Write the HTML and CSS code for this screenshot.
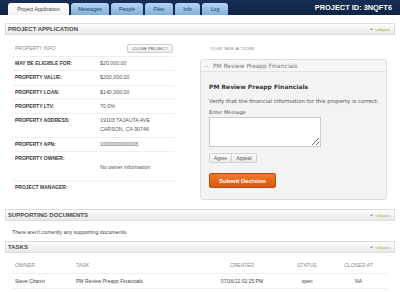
FILE: index.html
```html
<!DOCTYPE html>
<html lang="en">
<head>
<meta charset="utf-8">
<title>Project Application</title>
<link rel="stylesheet" href="styles.css">
</head>
<body>
<header class="topbar">
  <nav class="tabs">
    <span class="tab active t-app">Project Application</span>
    <span class="tab t-msg">Messages</span>
    <span class="tab t-people">People</span>
    <span class="tab t-files">Files</span>
    <span class="tab t-info">Info</span>
    <span class="tab t-log">Log</span>
  </nav>
  <div class="project-id">PROJECT ID: 3NQFT6</div>
</header>

<main class="page">
  <div class="bar">
    <span class="bar-title">PROJECT APPLICATION</span>
    <a class="collapse"><svg class="tri" width="3" height="2" viewBox="0 0 3 2"><path d="M0 2L1.5 0L3 2Z"/></svg>collapse</a>
  </div>

  <div class="columns">
    <section class="info">
      <div class="info-head">
        <span>PROPERTY INFO</span>
        <button class="close-btn">CLOSE PROJECT</button>
      </div>
      <div class="row"><div class="label">MAY BE ELIGIBLE FOR:</div><div class="value">$20,000.00</div></div>
      <div class="row"><div class="label">PROPERTY VALUE:</div><div class="value">$200,000.00</div></div>
      <div class="row"><div class="label">PROPERTY LOAN:</div><div class="value">$140,000.00</div></div>
      <div class="row"><div class="label">PROPERTY LTV:</div><div class="value">70.0%</div></div>
      <div class="row"><div class="label">PROPERTY ADDRESS:</div><div class="value">19103 TAJAUTA AVE<br>CARSON, CA 90746</div></div>
      <div class="row"><div class="label">PROPERTY APN:</div><div class="value">1000000000003</div></div>
      <div class="row owner"><div class="label">PROPERTY OWNER:</div><div class="value owner-value">No owner information</div></div>
      <div class="row last"><div class="label">PROJECT MANAGER:</div><div class="value"></div></div>
    </section>

    <section class="actions">
      <div class="actions-head">YOUR TASK ACTIONS</div>
      <div class="panel">
        <div class="panel-head"><span class="dash">–</span>PM Review Preapp Financials</div>
        <div class="panel-body">
          <div class="task-name">PM Review Preapp Financials</div>
          <div class="task-desc">Verify that the financial information for this property is correct.</div>
          <div class="msg-label">Enter Message</div>
          <textarea class="msg"></textarea>
          <div class="choice"><button class="choice-btn">Agree</button><button class="choice-btn">Appeal</button></div>
          <button class="submit">Submit Decision</button>
        </div>
      </div>
    </section>
  </div>

  <div class="bar bar-docs">
    <span class="bar-title">SUPPORTING DOCUMENTS</span>
    <a class="collapse"><svg class="tri" width="3" height="2" viewBox="0 0 3 2"><path d="M0 2L1.5 0L3 2Z"/></svg>collapse</a>
  </div>
  <p class="empty">There aren't currently any supporting documents.</p>

  <div class="bar bar-tasks">
    <span class="bar-title">TASKS</span>
    <a class="collapse"><svg class="tri" width="3" height="2" viewBox="0 0 3 2"><path d="M0 2L1.5 0L3 2Z"/></svg>collapse</a>
  </div>
  <table class="tasks">
    <thead>
      <tr><th class="c-owner">OWNER</th><th class="c-task">TASK</th><th class="c-created">CREATED</th><th class="c-status">STATUS</th><th class="c-closed">CLOSED AT</th></tr>
    </thead>
    <tbody>
      <tr><td class="c-owner">Steve Chanin</td><td class="c-task">PM Review Preapp Financials</td><td class="c-created">07/16/12 02:25 PM</td><td class="c-status">open</td><td class="c-closed">NA</td></tr>
    </tbody>
  </table>
</main>
</body>
</html>
```

FILE: styles.css
```css
* { box-sizing: border-box; margin: 0; padding: 0; }

body {
  width: 400px;
  height: 292px;
  overflow: hidden;
  background: #fff;
  font-family: "Liberation Sans", Arial, sans-serif;
  font-size: 5.2px;
  color: #444;
}

/* header */
.topbar {
  display: flex;
  justify-content: space-between;
  align-items: flex-end;
  height: 15px;
  padding: 0 8px;
  background: linear-gradient(#172f55, #0f2446);
}
.tabs { display: flex; gap: 2px; align-items: flex-end; }
.tab {
  height: 12px;
  line-height: 12px;
  text-align: center;
  border-radius: 3px 3px 0 0;
  background: linear-gradient(#b9d5ef, #7eafdc);
  color: #1f3d66;
  font-size: 5.2px;
}
.tab.active { background: linear-gradient(#ffffff, #f3f3f3); color: #444; }
.t-app { width: 61px; }
.t-msg { width: 38px; }
.t-people { width: 32px; }
.t-files { width: 28px; }
.t-info { width: 25px; }
.t-log { width: 26px; }
.project-id {
  align-self: center;
  color: #fff;
  font-weight: bold;
  font-size: 7.4px;
}

/* section bars */
.bar {
  display: flex;
  justify-content: space-between;
  align-items: center;
  height: 12px;
  margin: 8px 5px 0;
  padding: 0 4px 0 2px;
  border: 1px solid #dcdcdc;
  background: linear-gradient(#fdfdfd, #e8e8e8);
}
.bar-title { font-weight: bold; font-size: 6px; color: #4a4a4a; }
.collapse {
  display: flex;
  align-items: center;
  gap: 2px;
  color: #9bb41e;
  font-size: 4px;
}
.tri { fill: #9a9a9a; }
.bar-docs { margin-top: 9px; }
.bar-tasks { margin-top: 5px; }

/* columns */
.columns {
  display: grid;
  grid-template-columns: 163px 187px;
  column-gap: 25px;
  padding: 5px 0 0 12px;
  align-items: start;
}

.info-head {
  display: flex;
  justify-content: space-between;
  align-items: center;
  height: 17px;
  padding: 0 2px 0 3px;
  border-bottom: 1px solid #eeeeee;
  color: #8a8a8a;
  font-size: 5px;
}
.close-btn {
  width: 46px;
  height: 9px;
  border: 1px solid #cfcfcf;
  border-radius: 2px;
  background: linear-gradient(#ffffff, #ececec);
  font-family: "Liberation Sans", Arial, sans-serif;
  font-size: 4.2px;
  color: #555;
}

.row {
  display: grid;
  grid-template-columns: 85px 1fr;
  padding: 2px 3px;
  line-height: 9.3px;
  border-bottom: 1px solid #efefef;
}
.row.owner { padding-bottom: 7.3px; }
.row.last { border-bottom: none; }
.label { font-weight: bold; font-size: 5px; color: #3a3a3a; }
.value { font-size: 5.3px; color: #555; }
.owner-value { padding-top: 9.3px; }

/* task actions */
.actions-head {
  height: 17px;
  line-height: 17px;
  padding-left: 10px;
  font-size: 4.3px;
  color: #8a8a8a;
}
.panel {
  margin-top: 2px;
  border: 1px solid #dddddd;
  border-radius: 3px;
  background: #f3f3f3;
  font-family: "DejaVu Sans", Verdana, sans-serif;
}
.panel-head {
  height: 12px;
  line-height: 12px;
  padding-left: 4px;
  border-bottom: 1px solid #e2e2e2;
  background: #f6f6f6;
  border-radius: 3px 3px 0 0;
  color: #777;
  font-size: 5.9px;
}
.dash { display: inline-block; width: 8px; }
.panel-body { padding: 10px 1px 11px 8px; }
.task-name { font-weight: bold; font-size: 6px; line-height: 10px; color: #333; }
.task-desc { margin-top: 5px; font-size: 5.4px; line-height: 8px; color: #555; white-space: nowrap; }
.msg-label { margin-top: 3px; font-size: 5px; line-height: 8px; color: #555; }
.msg {
  display: block;
  margin-top: 1px;
  width: 112px;
  height: 30px;
  border: 1px solid #cccccc;
  background: #fff;
}
.choice { display: flex; margin-top: 6px; }
.choice-btn {
  height: 10px;
  padding: 0 4px;
  border: 1px solid #d2d2d2;
  background: linear-gradient(#fbfbfb, #e9e9e9);
  font-family: "Liberation Sans", Arial, sans-serif;
  font-size: 4.8px;
  color: #555;
}
.choice-btn:first-child { border-radius: 2px 0 0 2px; width: 23px; }
.choice-btn:last-child { border-radius: 0 2px 2px 0; border-left: none; width: 25px; }
.submit {
  display: block;
  margin-top: 10px;
  width: 67px;
  height: 15px;
  border: 1px solid #b9490c;
  border-radius: 2px;
  background: linear-gradient(#f07a2c, #d9560f);
  color: #fff;
  font-family: "Liberation Sans", Arial, sans-serif;
  font-weight: bold;
  font-size: 6px;
}

/* documents */
.empty {
  padding: 7px 12px 0;
  line-height: 8px;
  font-size: 5.3px;
  color: #444;
}

/* tasks table */
.tasks {
  margin: 5px 0 0 12px;
  width: 375px;
  border-collapse: collapse;
  table-layout: fixed;
}
.tasks th, .tasks td {
  height: 15px;
  padding: 0 3px;
  border-bottom: 1px solid #efefef;
  text-align: center;
  font-weight: normal;
}
.tasks th { font-size: 5.2px; color: #888; }
.tasks td { font-size: 5px; color: #444; }
.tasks .c-owner, .tasks .c-task { text-align: left; }
.c-owner { width: 61px; }
.c-task { width: 127px; }
.c-created { width: 84px; }
.c-status { width: 46px; }
.c-closed { width: 57px; }
```
